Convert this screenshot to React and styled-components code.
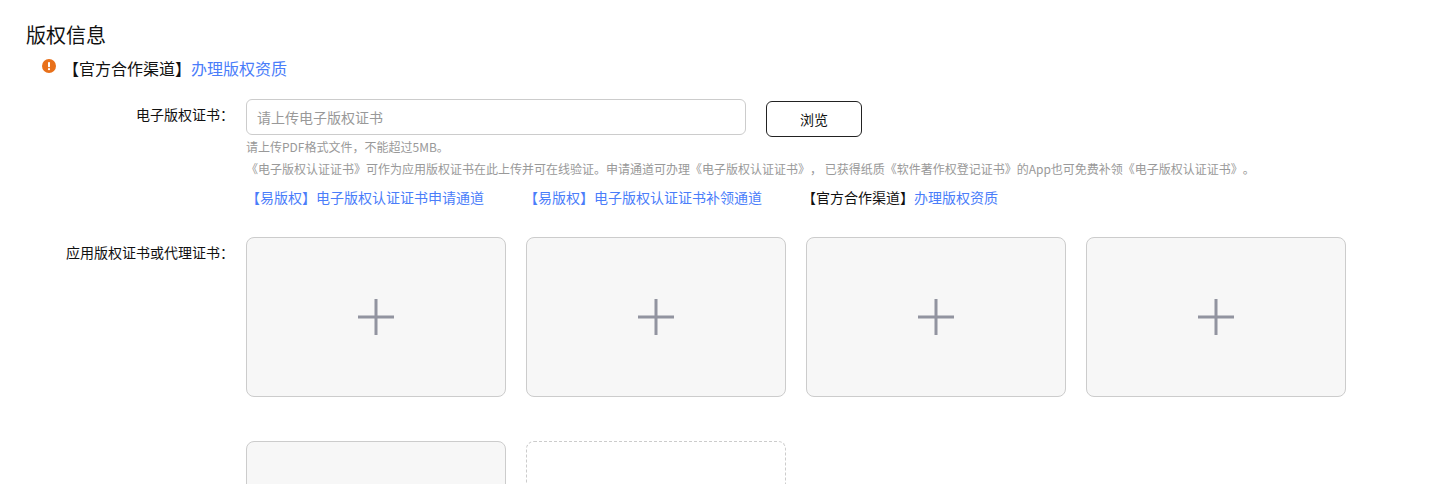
import React from "react";
import styled, { createGlobalStyle } from "styled-components";

const Global = createGlobalStyle`
  html, body { margin: 0; padding: 0; background: #fff; height: 484px; overflow: hidden; }
  body { font-family: "Noto Sans CJK SC", "Liberation Sans", sans-serif; color: #111; text-spacing-trim: space-all; }
`;

const Page = styled.div`
  width: 1446px;
  height: 484px;
  overflow: hidden;
  padding: 21px 0 0 26px;
  box-sizing: border-box;
`;
const Title = styled.h2`
  margin: 0;
  font-size: 20px;
  font-weight: 400;
  line-height: 28px;
  color: #111;
`;
const Notice = styled.div`
  display: flex;
  align-items: center;
  margin: 7px 0 0 16px;
  font-size: 16px;
  line-height: 24px;
`;
const NoticeIcon = styled.svg`
  width: 14px;
  height: 14px;
  margin: -4px 7px 0 0;
  flex: none;
`;
const Link = styled.a`
  color: #4a7dfa;
  text-decoration: none;
`;
const Row = styled.div`
  display: flex;
  margin-top: ${(p) => p.$top}px;
`;
const Label = styled.div`
  width: 208px;
  margin-right: 12px;
  text-align: right;
  font-size: 14px;
  line-height: 20px;
  color: #111;
  flex: none;
  margin-top: 5px;
`;
const Body = styled.div`
  flex: 1;
  min-width: 0;
`;
const InputRow = styled.div`
  display: flex;
  align-items: flex-start;
`;
const Input = styled.input`
  width: 500px;
  height: 36px;
  box-sizing: border-box;
  border: 1px solid #ccc;
  border-radius: 6px;
  padding: 0 10px;
  font: 14px "Noto Sans CJK SC", sans-serif;
  text-spacing-trim: space-all;
  outline: none;
  &::placeholder { color: #999; opacity: 1; }
`;
const Browse = styled.button`
  width: 96px;
  height: 36px;
  margin: 2px 0 0 20px;
  background: #fff;
  border: 1px solid #222;
  border-radius: 6px;
  font: 14px "Noto Sans CJK SC", sans-serif;
  color: #111;
  padding: 0;
`;
const Hint = styled.div`
  font-size: 12px;
  line-height: 20px;
  color: #999;
  white-space: nowrap;
  margin-top: ${(p) => p.$top || 0}px;
`;
const Links = styled.div`
  display: flex;
  gap: 40px;
  margin-top: 8px;
  font-size: 14px;
  line-height: 20px;
`;
const Grid = styled.div`
  display: grid;
  grid-template-columns: repeat(4, 260px);
  grid-auto-rows: 160px;
  gap: 44px 20px;
`;
const Card = styled.div`
  box-sizing: border-box;
  border: 1px ${(p) => (p.$empty ? "dashed" : "solid")} #ccc;
  border-radius: 8px;
  background: ${(p) => (p.$empty ? "#fff" : "#f7f7f7")};
  display: flex;
  align-items: center;
  justify-content: center;
`;
const Plus = styled.svg`
  width: 36px;
  height: 36px;
`;

const PlusIcon = () => (
  <Plus viewBox="0 0 36 36">
    <path d="M18 0v36M0 18h36" stroke="#9294a0" strokeWidth="3" fill="none" />
  </Plus>
);

export default function App() {
  return (
    <Page>
      <Global />
      <Title>版权信息</Title>
      <Notice>
        <NoticeIcon viewBox="0 0 14 14">
          <circle cx="7" cy="7" r="7" fill="#e8701a" />
          <rect x="6" y="3" width="2" height="5.2" rx="0.8" fill="#fff" />
          <circle cx="7" cy="10.2" r="1.1" fill="#fff" />
        </NoticeIcon>
        <span>【官方合作渠道】</span>
        <Link href="#">办理版权资质</Link>
      </Notice>
      <Row $top={19}>
        <Label>电子版权证书：</Label>
        <Body>
          <InputRow>
            <Input placeholder="请上传电子版权证书" />
            <Browse>浏览</Browse>
          </InputRow>
          <Hint $top={0}>请上传PDF格式文件，不能超过5MB。</Hint>
          <Hint $top={2}>《电子版权认证证书》可作为应用版权证书在此上传并可在线验证。申请通道可办理《电子版权认证证书》， 已获得纸质《软件著作权登记证书》的App也可免费补领《电子版权认证证书》。</Hint>
          <Links>
            <Link href="#">【易版权】电子版权认证证书申请通道</Link>
            <Link href="#">【易版权】电子版权认证证书补领通道</Link>
            <span>【官方合作渠道】<Link href="#">办理版权资质</Link></span>
          </Links>
        </Body>
      </Row>
      <Row $top={30}>
        <Label>应用版权证书或代理证书：</Label>
        <Body>
          <Grid>
            <Card><PlusIcon /></Card>
            <Card><PlusIcon /></Card>
            <Card><PlusIcon /></Card>
            <Card><PlusIcon /></Card>
            <Card><PlusIcon /></Card>
            <Card $empty />
          </Grid>
        </Body>
      </Row>
    </Page>
  );
}
